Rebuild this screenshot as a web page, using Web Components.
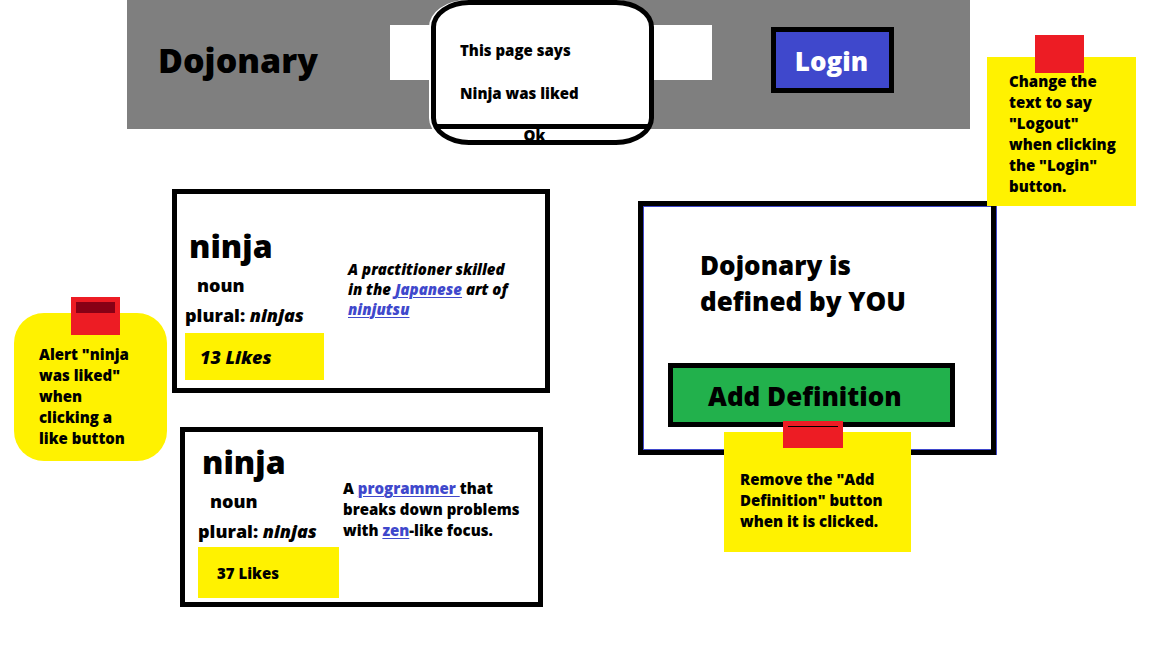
<!DOCTYPE html>
<html lang="en">
<head>
<meta charset="utf-8">
<title>Dojonary</title>
<style>
  body {
    margin: 0;
    background: #fff;
    color: #000;
    font-family: "Open Sans", "Noto Sans", sans-serif;
    font-weight: 800;
    font-size: 15px;
    line-height: 21px;
    --blue: #3f48cc;
    --yellow: #fff200;
    --red: #ed1c24;
    --maroon: #880015;
    --green: #22b14c;
    --gray: #7f7f7f;
  }
</style>
</head>
<body>
<dojo-page></dojo-page>

<template id="page">
  <style>
    :host { display: block; position: relative; }
    main {
      display: grid;
      grid-template-columns: 378fr 358fr;
      column-gap: 88px;
      align-items: start;
      padding: 60px 156px 41px 172px;
    }
    .entries { display: flex; flex-direction: column; gap: 34px; }
    .second { margin: 0 7px 0 8px; --inset: 13px; --top: 10px; --desc-top: 46px; --desc-gap: 4px; --desc-line: 21px;
      --likes-height: 51px; --likes-gap: 1px; --likes-width: 141px; --likes-pad: 19px; --bottom: 4px; }
    .first { --likes-size: 18px; --style: italic; }
    dojo-panel { margin-top: 12px; }
    a { color: var(--blue); text-underline-offset: 2px; text-decoration-thickness: 1px; }
    .login-note { position: absolute; top: 57px; right: 16px; width: 149px; --pad: 14px 0 9px 22px; --tape-left: 48px; --tape-top: -22px; }
    .like-note { position: absolute; top: 313px; left: 14px; width: 153px; --pad: 31px 0 12px 25px; --radius: 30px;
      --tape-left: 57px; --tape-top: -16px; --slit: var(--maroon); --slit-height: 11px; }
    .add-note { position: absolute; top: 226px; left: 81px; width: 187px; --pad: 37px 0 20px 16px;
      --tape-left: 59px; --tape-top: -11px; --tape-width: 60px; --tape-height: 27px; --slit: #000; --slit-height: 1px; }
  </style>
  <dojo-header></dojo-header>
  <main>
    <div class="entries">
      <dojo-entry class="first" likes="13">
        A practitioner skilled<br>in the<a href="#japanese"> Japanese</a> art of<br><a href="#ninjutsu">ninjutsu</a>
      </dojo-entry>
      <dojo-entry class="second" likes="37">
        A <a href="#programmer">programmer </a>that<br>breaks down problems<br>with <a href="#zen">zen</a>-like focus.
      </dojo-entry>
    </div>
    <dojo-panel>
      <dojo-note class="add-note">Remove the "Add<br>Definition" button<br>when it is clicked.</dojo-note>
    </dojo-panel>
  </main>
  <dojo-note class="login-note">Change the<br>text to say<br>"Logout"<br>when clicking<br>the "Login"<br>button.</dojo-note>
  <dojo-note class="like-note">Alert "ninja<br>was liked"<br>when<br>clicking a<br>like button</dojo-note>
</template>

<template id="header">
  <style>
    :host { display: block; margin: 0 182px 0 127px; position: relative; background: var(--gray); }
    header { display: flex; align-items: flex-start; min-height: 129px; box-sizing: border-box; padding: 25px 76px 0 31px; }
    h1 { margin: 11px 0 0; flex: 0 0 232px; font-size: 34px; line-height: 48px; font-weight: inherit; }
    input { flex: 1; min-width: 0; height: 55px; box-sizing: border-box; border: 0; padding: 0 16px; background: #fff; font: inherit; border-radius: 0; }
    button { margin: 2px 0 0 59px; width: 123px; height: 66px; padding: 2px 2px 0 0; border: 5px solid #000; background: var(--blue); color: #fff; font: inherit; font-size: 26px; line-height: 36px; }
    dojo-alert { position: absolute; top: 0; left: 304px; width: 223px; }
  </style>
  <header>
    <h1>Dojonary</h1>
    <input type="search" aria-label="Search definitions">
    <button type="button">Login</button>
  </header>
  <dojo-alert>
    <p>This page says</p>
    <p>Ninja was liked</p>
  </dojo-alert>
</template>

<template id="alert">
  <style>
    :host { display: block; }
    .box { box-sizing: border-box; height: 145px; border: 5px solid #000; border-radius: 38px / 27px; background: #fff; box-shadow: -2px 0 0 #fff; }
    .text { height: 119px; box-sizing: border-box; padding: 35px 0 0 24px; display: flex; flex-direction: column; gap: 22px; }
    ::slotted(p) { margin: 0; }
    button { display: block; width: 100%; height: 17px; padding: 0 16px 0 0; border: 0; border-top: 5px solid #000; background: none; color: #000; font: inherit; line-height: 12px; }
  </style>
  <div class="box" role="alertdialog" aria-label="Alert">
    <div class="text"><slot></slot></div>
    <button type="button">Ok</button>
  </div>
</template>

<template id="entry">
  <style>
    :host { display: block; border: 5px solid #000; background: #fff; }
    article { display: flex; gap: var(--desc-gap, 24px); padding: var(--top, 32px) 0 var(--bottom, 8px) var(--inset, 8px); }
    .word { flex: 0 0 var(--likes-width, 139px); }
    h2 { margin: 0 0 4px 4px; font-size: 32px; line-height: 40px; font-weight: inherit; }
    p { margin: 0; font-size: 18px; line-height: 30px; white-space: nowrap; }
    .noun { padding-left: 12px; }
    button { display: block; width: 100%; height: var(--likes-height, 47px); margin-top: var(--likes-gap, 3px); padding: 2px 0 0 var(--likes-pad, 15px);
      border: 0; background: var(--yellow); color: #000; text-align: left; font: inherit; font-size: var(--likes-size, 15px); font-style: var(--style, normal); }
    .desc { margin-top: calc(var(--desc-top, 65px) - var(--top, 32px)); line-height: var(--desc-line, 20px); font-style: var(--style, normal); white-space: nowrap; }
  </style>
  <article>
    <div class="word">
      <h2>ninja</h2>
      <p class="noun">noun</p>
      <p>plural: <i>ninjas</i></p>
      <button type="button"></button>
    </div>
    <div class="desc"><slot></slot></div>
  </article>
</template>

<template id="panel">
  <style>
    :host { display: block; position: relative; border: 5px solid #000; background: #fff;
      box-shadow: inset 1px 1px 0 var(--blue), inset 0 -1px 0 var(--blue), 1px 0 0 var(--blue); }
    section { padding: 41px 36px 23px 25px; }
    h2 { margin: 0 0 44px 32px; font-size: 26px; line-height: 36px; font-weight: inherit; }
    button { display: block; width: 100%; height: 64px; padding: 2px 0 0 35px; border: 5px solid #000; background: var(--green); color: #000; text-align: left; font: inherit; font-size: 26px; line-height: 36px; }
  </style>
  <section>
    <h2>Dojonary is<br>defined by YOU</h2>
    <button type="button">Add Definition</button>
  </section>
  <slot></slot>
</template>

<template id="note">
  <style>
    :host { display: block; box-sizing: border-box; padding: var(--pad); background: var(--yellow); border-radius: var(--radius, 0); white-space: nowrap; }
    .tape { position: absolute; top: var(--tape-top); left: var(--tape-left); box-sizing: border-box; padding: 5px;
      width: var(--tape-width, 49px); height: var(--tape-height, 38px); background: var(--red); }
    .slit { height: var(--slit-height, 0); background: var(--slit, none); }
  </style>
  <div class="tape"><div class="slit"></div></div>
  <slot></slot>
</template>

<script>
  class TemplateElement extends HTMLElement {
    constructor() {
      super();
      const template = document.getElementById(this.constructor.template);
      this.attachShadow({ mode: "open" }).append(template.content.cloneNode(true));
    }
  }
  class DojoNote extends TemplateElement { static template = "note"; }
  class DojoAlert extends TemplateElement {
    static template = "alert";
    connectedCallback() {
      this.shadowRoot.querySelector("button").onclick = () => this.remove();
    }
  }
  class DojoHeader extends TemplateElement {
    static template = "header";
    connectedCallback() {
      const login = this.shadowRoot.querySelector("button");
      login.onclick = () => { login.textContent = "Logout"; };
    }
  }
  class DojoEntry extends TemplateElement {
    static template = "entry";
    connectedCallback() {
      const button = this.shadowRoot.querySelector("button");
      let likes = Number(this.getAttribute("likes"));
      button.textContent = `${likes} Likes`;
      button.onclick = () => { button.textContent = `${++likes} Likes`; };
    }
  }
  class DojoPanel extends TemplateElement {
    static template = "panel";
    connectedCallback() {
      const button = this.shadowRoot.querySelector("button");
      button.onclick = () => button.remove();
    }
  }
  class DojoPage extends TemplateElement { static template = "page"; }
  customElements.define("dojo-note", DojoNote);
  customElements.define("dojo-alert", DojoAlert);
  customElements.define("dojo-header", DojoHeader);
  customElements.define("dojo-entry", DojoEntry);
  customElements.define("dojo-panel", DojoPanel);
  customElements.define("dojo-page", DojoPage);
</script>
</body>
</html>
